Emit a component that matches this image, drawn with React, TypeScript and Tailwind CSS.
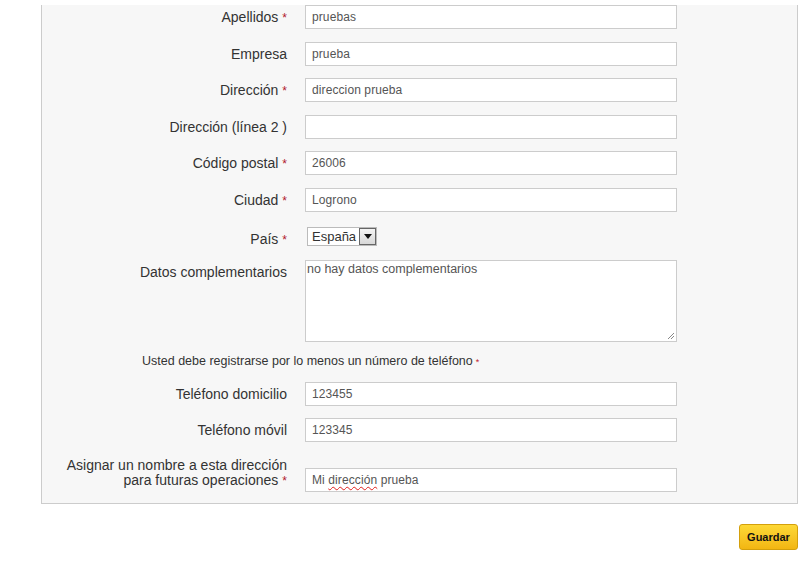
import React from "react";

// Address form panel — right-aligned labels, fixed-width inputs, yellow save button.
const font = { fontFamily: '"Liberation Sans", Arial, sans-serif' };

function Req() {
  return <span className="ml-1 text-[12px] leading-none text-[#b0182c]">*</span>;
}

function Label({ children, req }: { children: React.ReactNode; req?: boolean }) {
  return (
    <div className="w-[246px] shrink-0 pr-[1px] pt-[4px] text-right text-[14px] leading-[16px] text-[#333]">
      {children}
      {req && <Req />}
    </div>
  );
}

function Field({ value }: { value: string }) {
  return (
    <input
      readOnly
      value={value}
      className="h-[24px] w-[372px] border border-[#ccc] bg-white px-[6px] text-[12px] tracking-[0.1px] text-[#555] outline-none"
      style={font}
    />
  );
}

const rows: { label: string; req?: boolean; value: string; mt: string }[] = [
  { label: "Apellidos", req: true, value: "pruebas", mt: "mt-[5px]" },
  { label: "Empresa", value: "prueba", mt: "mt-[13px]" },
  { label: "Dirección", req: true, value: "direccion prueba", mt: "mt-[12px]" },
  { label: "Dirección (línea 2 )", value: "", mt: "mt-[13px]" },
  { label: "Código postal", req: true, value: "26006", mt: "mt-[12px]" },
  { label: "Ciudad", req: true, value: "Logrono", mt: "mt-[13px]" },
];

export default function App() {
  return (
    <div className="min-h-[571px] w-[811px] bg-white" style={font}>
      <div className="ml-[41px] w-[757px] border border-t-0 border-[#ccc] bg-[#f7f7f7] pb-[11px]">
        {rows.map((r) => (
          <div key={r.label} className={`flex gap-[17px] ${r.mt}`}>
            <Label req={r.req}>{r.label}</Label>
            <Field value={r.value} />
          </div>
        ))}

        <div className="mt-[15px] flex gap-[17px]">
          <Label req>País</Label>
          <div className="ml-[2px] flex h-[19px] w-[70px] items-center border border-[#bbb] bg-white pl-[4px] text-[13px] text-[#333]">
            <span className="flex-1">España</span>
            <span className="flex h-[17px] w-[17px] items-center justify-center border border-[#666] bg-gradient-to-b from-[#f4f4f4] to-[#d8d8d8]">
              <svg width="8" height="5" viewBox="0 0 8 5">
                <path d="M0 0h8L4 5z" fill="#111" />
              </svg>
            </span>
          </div>
        </div>

        <div className="mt-[13px] flex gap-[17px]">
          <Label>Datos complementarios</Label>
          <div className="relative h-[82px] w-[372px] border border-[#ccc] bg-white pl-[1px] pt-[1px] text-[12.5px] leading-[14px] text-[#555]">
            no hay datos complementarios
            <svg className="absolute bottom-[1px] right-[1px]" width="8" height="8" viewBox="0 0 8 8">
              <path d="M7 1L1 7M7 4L4 7" stroke="#888" strokeWidth="1" />
            </svg>
          </div>
        </div>

        <div className="mt-[12px] pl-[100px] text-[12.5px] leading-[14px] text-[#333]">
          Usted debe registrarse por lo menos un número de teléfono
          <span className="ml-[3px] text-[9px] text-[#c0182c]">*</span>
        </div>

        <div className="mt-[13px] flex gap-[17px]">
          <Label>Teléfono domicilio</Label>
          <Field value="123455" />
        </div>
        <div className="mt-[12px] flex gap-[17px]">
          <Label>Teléfono móvil</Label>
          <Field value="123345" />
        </div>

        <div className="mt-[16px] flex items-start gap-[17px]">
          <div className="w-[246px] shrink-0 pr-[1px] text-right text-[14px] leading-[15px] text-[#333]">
            <div>Asignar un nombre a esta dirección</div>
            <div>
              para futuras operaciones
              <Req />
            </div>
          </div>
          <div className="mt-[10px] flex h-[24px] w-[372px] items-center border border-[#ccc] bg-white px-[6px] text-[12px] tracking-[0.1px] text-[#555]">
            Mi&nbsp;
            <span className="underline decoration-[#e0201c] decoration-wavy decoration-1 underline-offset-2">
              dirección
            </span>
            &nbsp;prueba
          </div>
        </div>
      </div>

      <div className="flex w-[798px] justify-end pt-[20px]">
        <button className="h-[26px] w-[59px] rounded-[3px] border border-[#d4a00c] bg-gradient-to-b from-[#fdd835] to-[#f2b611] text-[11px] font-bold text-[#111]">
          Guardar
        </button>
      </div>
    </div>
  );
}
